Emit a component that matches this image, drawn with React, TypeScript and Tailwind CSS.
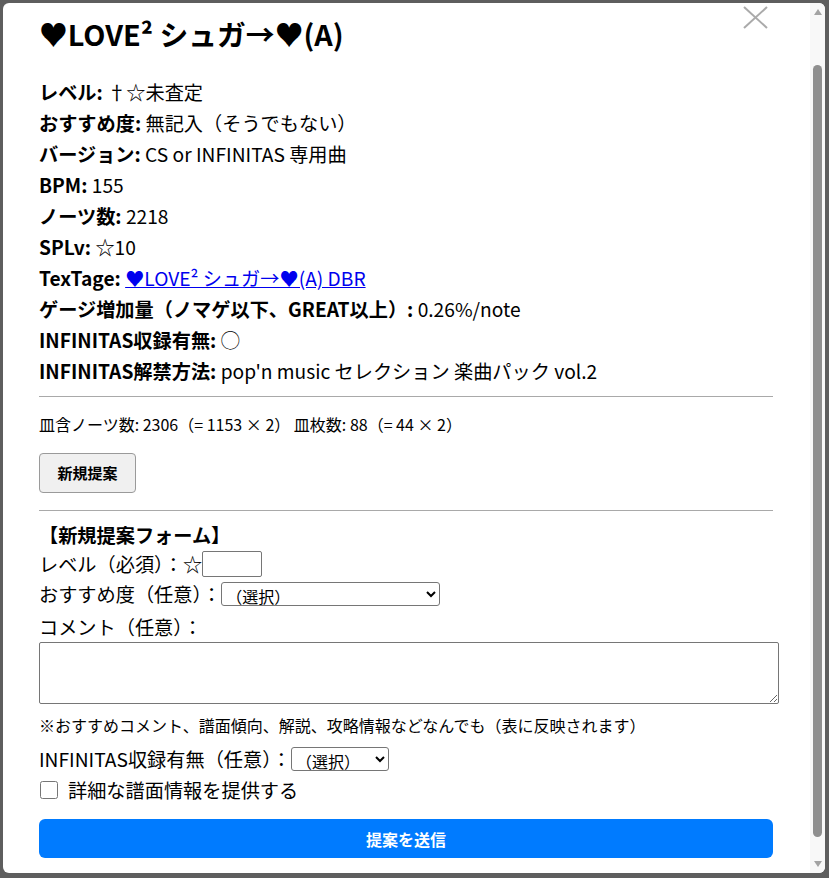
import React from 'react'

const font = { fontFamily: '"Noto Sans CJK JP", "Noto Sans", sans-serif' }

type InfoRow = {
  label: string
  value: React.ReactNode
}

const rows: InfoRow[] = [
  { label: 'レベル:', value: '†☆未査定' },
  { label: 'おすすめ度:', value: '無記入（そうでもない）' },
  { label: 'バージョン:', value: 'CS or INFINITAS 専用曲' },
  { label: 'BPM:', value: '155' },
  { label: 'ノーツ数:', value: '2218' },
  { label: 'SPLv:', value: '☆10' },
  {
    label: 'TexTage:',
    value: (
      <a href="#" className="text-[#0000ee] underline">
        ♥LOVE² シュガ→♥(A) DBR
      </a>
    ),
  },
  { label: 'ゲージ増加量（ノマゲ以下、GREAT以上）:', value: '0.26%/note' },
  { label: 'INFINITAS収録有無:', value: '◯' },
  { label: 'INFINITAS解禁方法:', value: "pop'n music セレクション 楽曲パック vol.2" },
]

function FakeScrollbar() {
  return (
    <div className="flex w-[15px] shrink-0 flex-col items-center bg-[#f8f8f8]">
      <div className="flex h-[15px] w-full items-center justify-center pt-[3px]">
        <svg width="8" height="6" viewBox="0 0 8 6">
          <polygon points="4,0 8,6 0,6" fill="#a3a3a3" />
        </svg>
      </div>
      <div className="mt-[47px] h-[772px] w-[9px] rounded-full bg-[#8f8f8f]" />
      <div className="mt-auto flex h-[15px] w-full items-center justify-center pb-[3px]">
        <svg width="8" height="6" viewBox="0 0 8 6">
          <polygon points="0,0 8,0 4,6" fill="#a3a3a3" />
        </svg>
      </div>
    </div>
  )
}

export default function App() {
  return (
    <div className="h-[878px] w-[829px] overflow-hidden bg-[#5e5e5e] pl-[3px] pt-[3px]" style={font}>
      <div className="relative flex h-[870px] w-[822px] overflow-hidden rounded-[6px] bg-white text-black">
        <button className="absolute right-[57px] top-[3px]" aria-label="close">
          <svg width="25" height="23" viewBox="0 0 25 23">
            <line x1="1" y1="1" x2="24" y2="22" stroke="#aaaaaa" strokeWidth="2" />
            <line x1="24" y1="1" x2="1" y2="22" stroke="#aaaaaa" strokeWidth="2" />
          </svg>
        </button>

        <div className="flex-1 overflow-hidden pl-[36px] pr-[37px] pt-[13px]">
          <h2 className="text-[28.8px] font-bold leading-[36px]">♥LOVE² シュガ→♥(A)</h2>

          <div className="mt-[25px] text-[19.2px] leading-[31px]">
            {rows.map((row) => (
              <div key={row.label} className="whitespace-nowrap">
                <span className="font-bold">{row.label}</span> {row.value}
              </div>
            ))}
          </div>

          <hr className="mt-[9px] border-t border-[#a9a9a9]" />

          <div className="mt-[16px] text-[16px] leading-[22px]">
            皿含ノーツ数: 2306（= 1153 × 2） 皿枚数: 88（= 44 × 2）
          </div>

          <button className="mt-[18px] h-[40px] w-[97px] rounded-[4px] border border-[#9a9a9a] bg-[#f0f0f0] text-[15px] font-bold">
            新規提案
          </button>

          <hr className="mt-[17px] border-t border-[#a9a9a9]" />

          <form className="text-[19.2px]" onSubmit={(e) => e.preventDefault()}>
            <div className="mt-[11px] font-bold leading-[26px]">【新規提案フォーム】</div>

            <div className="mt-[2px] flex h-[28px] items-center">
              <span>レベル（必須）：☆</span>
              <input type="text" className="h-[26px] w-[60px] rounded-[2px] border border-[#767676] bg-white" />
            </div>

            <div className="mt-[2px] flex h-[28px] items-center">
              <span>おすすめ度（任意）：</span>
              <select className="h-[24px] w-[219px] rounded-[3px] border border-[#767676] bg-white py-0 text-[16px]">
                <option>（選択）</option>
                <option>おすすめ</option>
                <option>そうでもない</option>
              </select>
            </div>

            <div className="mt-[6px] leading-[26px]">コメント（任意）：</div>
            <textarea className="mt-[2px] block h-[62px] w-[740px] resize-y rounded-[2px] border border-[#767676] bg-white" />

            <div className="mt-[10px] text-[16px] leading-[22px]">
              ※おすすめコメント、譜面傾向、解説、攻略情報などなんでも（表に反映されます）
            </div>

            <div className="mt-[9px] flex h-[28px] items-center">
              <span>INFINITAS収録有無（任意）：</span>
              <select className="h-[24px] w-[98px] rounded-[3px] border border-[#767676] bg-white py-0 text-[16px]">
                <option>（選択）</option>
                <option>◯</option>
                <option>×</option>
              </select>
            </div>

            <label className="mt-[4px] flex h-[26px] items-center gap-[10px]">
              <input type="checkbox" className="ml-[1px] h-[18px] w-[18px]" />
              <span>詳細な譜面情報を提供する</span>
            </label>

            <button
              type="submit"
              className="mt-[16px] h-[39px] w-full rounded-[6px] bg-[#007bff] text-[16px] font-bold text-white"
            >
              提案を送信
            </button>
          </form>
        </div>

        <FakeScrollbar />
      </div>
    </div>
  )
}
